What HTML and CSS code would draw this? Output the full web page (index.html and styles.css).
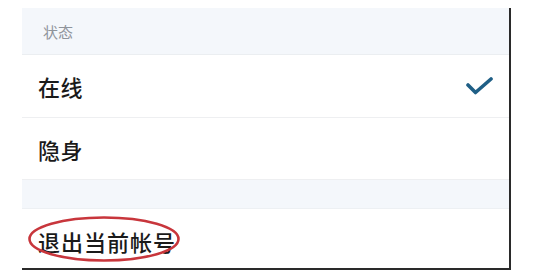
FILE: index.html
```html
<!DOCTYPE html>
<html lang="zh">
<head>
<meta charset="utf-8">
<link rel="stylesheet" href="styles.css">
</head>
<body>
<div class="page">
  <div class="panel">
    <div class="section-head">状态</div>
    <div class="row">
      <span class="label">在线</span>
      <svg class="check" width="27" height="19" viewBox="0 0 27 19">
        <path d="M2 8 L9.5 15.5 L25 2" fill="none" stroke="#1f5f86" stroke-width="3.6" stroke-linecap="round" stroke-linejoin="round"/>
      </svg>
    </div>
    <div class="row">
      <span class="label">隐身</span>
    </div>
    <div class="gap"></div>
    <div class="row last">
      <span class="label logout">退出当前帐号
        <svg class="ring" width="154" height="48" viewBox="0 0 154 48">
          <ellipse cx="77" cy="24" rx="74.5" ry="21.5" fill="none" stroke="#c8363c" stroke-width="2.6"/>
        </svg>
      </span>
    </div>
  </div>
</div>
</body>
</html>
```
FILE: styles.css
```css
html, body {
  margin: 0;
  padding: 0;
  background: #ffffff;
}
.page {
  padding: 8px 0 0 22px;
  width: 534px;
  height: 271px;
  box-sizing: border-box;
  font-family: "Noto Sans CJK SC", "Noto Sans", sans-serif;
}
.panel {
  width: 487px;
  border-right: 2px solid #2a2a2a;
  border-bottom: 2px solid #2a2a2a;
  display: flex;
  flex-direction: column;
}
.section-head {
  height: 47px;
  background: #f4f7fb;
  border-bottom: 1px solid #ebeef1;
  box-sizing: border-box;
  padding-left: 21px;
  display: flex;
  align-items: center;
  font-size: 15px;
  color: #8f949b;
}
.row {
  height: 63px;
  box-sizing: border-box;
  border-bottom: 1px solid #eeeff1;
  display: flex;
  align-items: center;
  justify-content: space-between;
  padding: 0 16px 0 16px;
}
.row + .row {
  height: 62px;
}
.row.last {
  height: 59px;
  border-bottom: none;
  padding-top: 4px;
}
.label {
  font-size: 22px;
  font-weight: 500;
  color: #1a1a1a;
  letter-spacing: 0.5px;
}
.check {
  display: block;
}
.gap {
  height: 29px;
  background: #f4f7fb;
  border-bottom: 1px solid #edf0f3;
  box-sizing: border-box;
}
.logout {
  position: relative;
  letter-spacing: 1px;
}
.ring {
  position: absolute;
  left: -11px;
  top: -10px;
}
```
